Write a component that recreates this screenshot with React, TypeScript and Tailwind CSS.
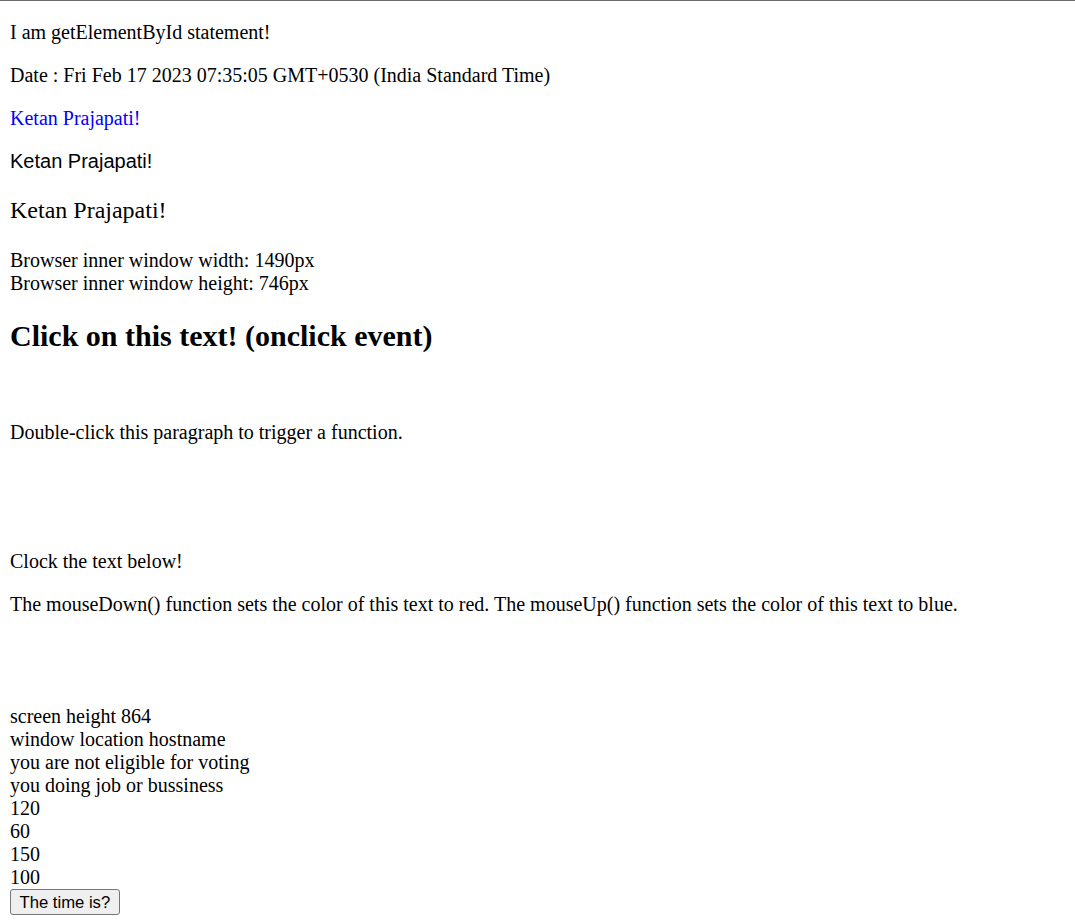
import React from "react";

const rows = [
  "screen height 864",
  "window location hostname",
  "you are not eligible for voting",
  "you doing job or bussiness",
  "120",
  "60",
  "150",
  "100",
];

const App = () => {
  return (
    <div className="min-h-[922px] border-t border-[#6b6b6b] bg-white px-[10px] font-['Liberation_Serif',serif] text-[20px] leading-[23px] text-black">
      <p className="mt-[20px]">I am getElementById statement!</p>
      <p className="mt-[20px]">Date : Fri Feb 17 2023 07:35:05 GMT+0530 (India Standard Time)</p>
      <p className="mt-[20px] text-[#0000ff]">Ketan Prajapati!</p>
      <p className="mt-[20px] font-['Liberation_Sans',sans-serif]">Ketan Prajapati!</p>
      <p className="mt-[24px] text-[24px] leading-[27.6px]">Ketan Prajapati!</p>
      <div className="mt-[24px]">
        <div>Browser inner window width: 1490px</div>
        <div>Browser inner window height: 746px</div>
      </div>
      <h2 className="mt-[24px] text-[30px] font-bold leading-[34.5px]">
        Click on this text! (onclick event)
      </h2>
      <p className="mt-[68px]">Double-click this paragraph to trigger a function.</p>
      <p className="mt-[106px]">Clock the text below!</p>
      <p className="mt-[20px]">
        The mouseDown() function sets the color of this text to red. The mouseUp() function sets the color of this text to blue.
      </p>
      <div className="mt-[89px]">
        {rows.map((r) => (
          <div key={r}>{r}</div>
        ))}
      </div>
      <div className="flex">
        <button className="h-[26px] rounded-[3px] border border-[#767676] bg-[#efefef] px-[8.5px] font-['Liberation_Sans',sans-serif] text-[16.67px] leading-[19px] text-black">
          The time is?
        </button>
      </div>
    </div>
  );
};

export default App;
